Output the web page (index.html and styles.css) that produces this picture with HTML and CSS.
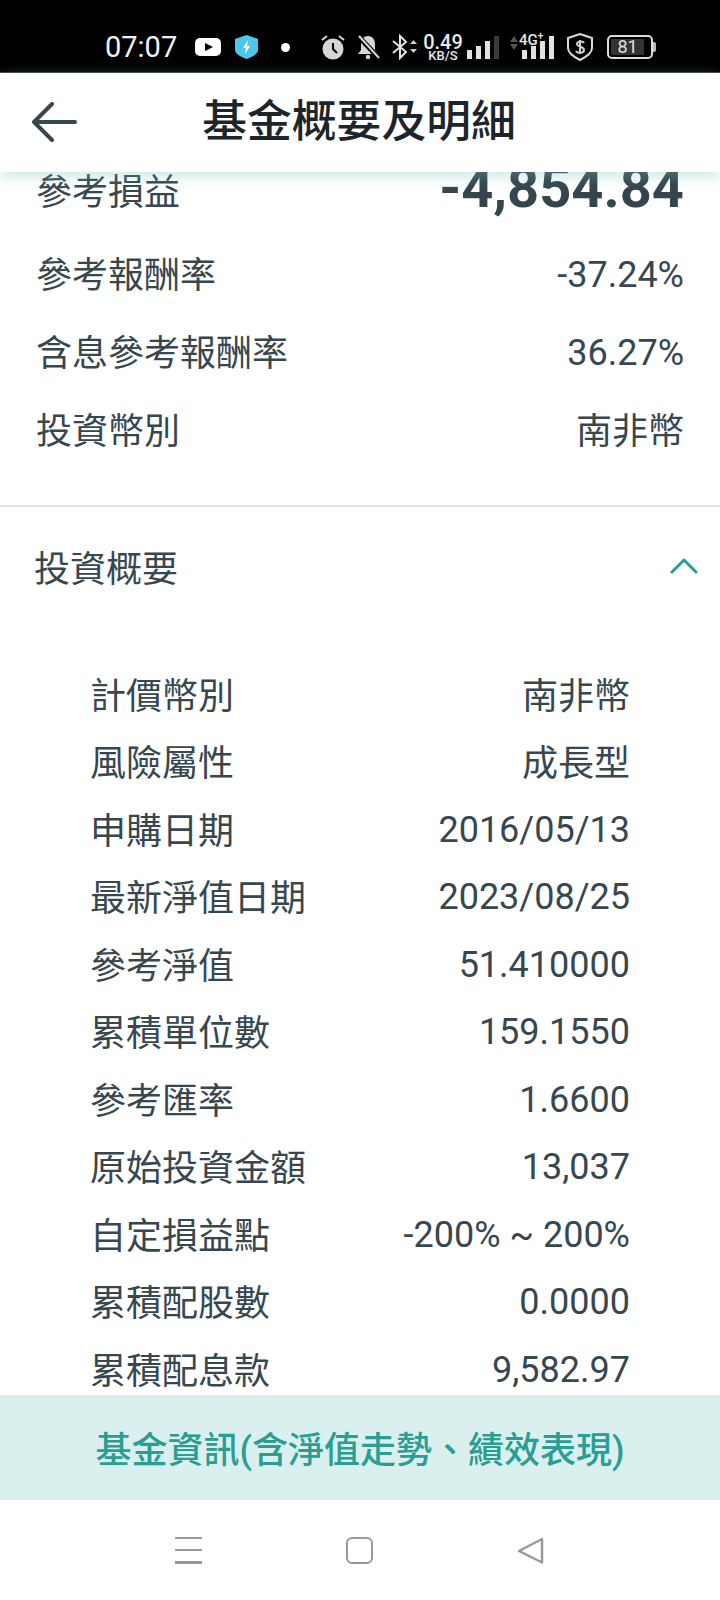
FILE: index.html
```html
<!DOCTYPE html>
<html lang="zh-Hant">
<head>
<meta charset="utf-8">
<title>基金概要及明細</title>
<link rel="stylesheet" href="styles.css">
</head>
<body>
<div class="phone">
  <div class="status">
    <span class="time">07:07</span>
    <svg class="ic-yt" viewBox="0 0 26 18"><rect width="26" height="18" rx="5" fill="#fff"/><path d="M10 5l8 4-8 4z" fill="#000"/></svg>
    <svg class="ic-shield" viewBox="0 0 23 24"><path d="M11.5 0L23 4v11c0 4-6 7-11.500 9C6 22 0 19 0 15V4z" fill="#4cc8ea"/><path d="M13 5l-5 8h3l-1 6 5-8h-3z" fill="#fff"/></svg>
    <span class="dot"></span>
    <svg class="ic-alarm" viewBox="0 0 24 26"><circle cx="12" cy="15" r="10.500" fill="#d6d6d6"/><path d="M12 9v6l4 4" fill="none" stroke="#000" stroke-width="2"/><path d="M1 6l5-4M23 6l-5-4" stroke="#d6d6d6" stroke-width="2" fill="none"/></svg>
    <svg class="ic-bell" viewBox="0 0 24 26"><path d="M12 2c-4 0-7 3-7 8v6l-3 4h20l-3-4v-6c0-5-3-8-7-8z" fill="#d6d6d6"/><circle cx="12" cy="23" r="2.200" fill="#d6d6d6"/><path d="M2 2l21 22" stroke="#000" stroke-width="5"/><path d="M3 2l20 22" stroke="#d6d6d6" stroke-width="2"/></svg>
    <svg class="ic-bt" viewBox="0 0 26 26"><path d="M2 7l13 11-6 6V2l6 6L2 19" fill="none" stroke="#e2e2e2" stroke-width="2"/><path d="M19 10l3.500-4 3.500 4zM19 15l3.500 4 3.500-4z" fill="#cfcfcf"/></svg>
    <span class="speed"><span class="speed-num">0.49</span><span class="speed-unit">KB/S</span></span>
    <svg class="ic-bars" viewBox="0 0 32 23"><rect x="0" y="14" width="5" height="9" fill="#e2e2e2"/><rect x="9" y="10" width="5" height="13" fill="#e2e2e2"/><rect x="18" y="5" width="5" height="18" fill="#e2e2e2"/><rect x="27" y="0" width="5" height="23" fill="#3a3a3a"/></svg>
    <span class="net">
      <svg class="ic-arrows" viewBox="0 0 8 14"><path d="M0 6l4-6 4 6z" fill="#555"/><path d="M0 8l4 6 4-6z" fill="#555"/></svg>
      <span class="net-label">4G<sup class="net-plus">+</sup></span>
      <svg class="ic-bars2" viewBox="0 0 32 23"><rect x="0" y="14" width="5" height="9" fill="#e2e2e2"/><rect x="9" y="10" width="5" height="13" fill="#e2e2e2"/><rect x="18" y="5" width="5" height="18" fill="#e2e2e2"/><rect x="27" y="0" width="5" height="23" fill="#e2e2e2"/></svg>
    </span>
    <svg class="ic-sec" viewBox="0 0 26 28"><path d="M13 1l12 4v10c0 5-6 9-12 12C7 24 1 20 1 15V5z" fill="none" stroke="#dcdcdc" stroke-width="2"/><path d="M17 10c-1-2-7-2-7 1s7 2 7 6-7 3-8 1M13 7v14" fill="none" stroke="#cfcfcf" stroke-width="2"/></svg>
    <span class="battery"><span class="battery-fill">81</span></span><span class="battery-nub"></span>
  </div>

  <header class="topbar">
    <svg class="back" viewBox="0 0 46 40"><path d="M44 20H3M21 2L3 20l18 18" fill="none" stroke="#37474f" stroke-width="4" stroke-linecap="round" stroke-linejoin="round"/></svg>
    <h1 class="title">基金概要及明細</h1>
  </header>

  <main class="content">
    <div class="scroll">
      <section class="summary">
        <div class="sum-row sum-row-first"><span class="cjk">參考損益</span><span class="amount">-4,854.84</span></div>
        <div class="sum-row"><span class="cjk">參考報酬率</span><span class="num">-37.24%</span></div>
        <div class="sum-row"><span class="cjk">含息參考報酬率</span><span class="num">36.27%</span></div>
        <div class="sum-row"><span class="cjk">投資幣別</span><span class="cjk">南非幣</span></div>
      </section>
      <section class="panel">
        <div class="panel-head"><span>投資概要</span>
          <svg class="chevron" viewBox="0 0 28 16"><path d="M2 14L14 2l12 12" fill="none" stroke="#2a9d94" stroke-width="3" stroke-linecap="round" stroke-linejoin="round"/></svg>
        </div>
        <div class="detail">
          <div class="det-row"><span class="cjk">計價幣別</span><span class="cjk">南非幣</span></div>
          <div class="det-row"><span class="cjk">風險屬性</span><span class="cjk">成長型</span></div>
          <div class="det-row"><span class="cjk">申購日期</span><span>2016/05/13</span></div>
          <div class="det-row"><span class="cjk">最新淨值日期</span><span>2023/08/25</span></div>
          <div class="det-row"><span class="cjk">參考淨值</span><span>51.410000</span></div>
          <div class="det-row"><span class="cjk">累積單位數</span><span>159.1550</span></div>
          <div class="det-row"><span class="cjk">參考匯率</span><span>1.6600</span></div>
          <div class="det-row"><span class="cjk">原始投資金額</span><span>13,037</span></div>
          <div class="det-row"><span class="cjk">自定損益點</span><span>-200% ~ 200%</span></div>
          <div class="det-row"><span class="cjk">累積配股數</span><span>0.0000</span></div>
          <div class="det-row"><span class="cjk">累積配息款</span><span>9,582.97</span></div>
        </div>
      </section>
    </div>
  </main>

  <button class="cta" type="button">基金資訊(含淨值走勢、績效表現)</button>

  <nav class="navbar">
    <span class="nav-menu"><i></i><i></i><i></i></span>
    <span class="nav-home"></span>
    <svg class="nav-back" viewBox="0 0 27 27"><path d="M25 2L2 14l23 11.500z" fill="none" stroke="#999" stroke-width="2.500" stroke-linejoin="round"/></svg>
  </nav>
</div>
</body>
</html>
```

FILE: styles.css
```css
* { box-sizing: border-box; }
html, body { margin: 0; padding: 0; background: #fff; }
body { font-family: Roboto, "Noto Sans CJK TC", sans-serif; color: #37474f; }
.phone { width: 720px; height: 1600px; display: flex; flex-direction: column; overflow: hidden; }

.status { height: 73px; flex: none; background: #000; display: flex; align-items: center; padding: 22px 0 0 105px; color: #e8e8e8; border-bottom: 1px solid #444; }
.time { font-size: 29px; line-height: 1; width: 71px; color: #f2f2f2; }
.ic-yt { width: 26px; height: 18px; margin-left: 19px; }
.ic-shield { width: 23px; height: 24px; margin-left: 14px; }
.dot { width: 9px; height: 9px; border-radius: 50%; background: #fff; margin-left: 23px; }
.ic-alarm { width: 24px; height: 26px; margin-left: 31px; }
.ic-bell { width: 24px; height: 26px; margin-left: 11px; }
.ic-bt { width: 26px; height: 26px; margin-left: 11px; }
.speed { width: 38px; margin-left: 7px; display: flex; flex-direction: column; align-items: center; line-height: 1; }
.speed-num { font-size: 20px; font-weight: 500; line-height: 16px; }
.speed-unit { font-size: 13px; font-weight: 500; line-height: 11px; }
.ic-bars { width: 32px; height: 23px; margin-left: 5px; }
.net { display: flex; align-items: flex-end; position: relative; margin-left: 11px; width: 44px; height: 23px; }
.ic-arrows { width: 8px; height: 14px; align-self: flex-start; }
.net-label { position: absolute; left: 9px; top: -3px; font-size: 15px; font-weight: 500; line-height: 14px; }
.net-plus { font-size: 10px; line-height: 0; }
.ic-bars2 { width: 32px; height: 23px; margin-left: 4px; }
.ic-sec { width: 26px; height: 28px; margin-left: 13px; }
.battery { width: 46px; height: 24px; margin-left: 14px; border: 2px solid #dcdcdc; border-radius: 5px; padding: 2px; display: flex; }
.battery-fill { width: 33px; background: #333; border-radius: 2px 0 0 2px; font-size: 18px; line-height: 16px; text-align: center; color: #e0e0e0; }
.battery-nub { width: 3px; height: 10px; background: #bbb; border-radius: 0 2px 2px 0; }

.topbar { position: relative; z-index: 2; height: 99px; flex: none; background: #fff; display: flex; align-items: center; justify-content: center; box-shadow: 0 4px 14px rgba(120, 190, 185, 0.4); }
.back { position: absolute; left: 31px; top: 29px; width: 46px; height: 40px; }
.title { margin: 0 0 0 -2px; font-size: 44.800px; font-weight: 500; line-height: 1; color: #1c2529; }

.content { flex: 1; min-height: 0; overflow: hidden; }
.scroll { margin-top: -25px; }

.cjk { padding-bottom: 4px; }
.num { padding-top: 2px; }
.summary { padding: 0 36px 36px; border-bottom: 2px solid #dde5e4; }
.sum-row { height: 78px; display: flex; align-items: center; justify-content: space-between; font-size: 36px; }
.sum-row-first { height: 88px; }
.amount { font-size: 56px; font-weight: 700; color: #34454e; padding-bottom: 6px; }

.panel-head { height: 80px; margin-top: 19px; padding: 0 22px 0 34px; display: flex; align-items: center; justify-content: space-between; font-size: 36px; }
.chevron { width: 28px; height: 16px; }

.detail { padding: 55px 90px 0 90px; }
.det-row { height: 67.500px; display: flex; align-items: center; justify-content: space-between; font-size: 36px; }

.cta { flex: none; height: 105px; width: 100%; border: 0; border-top: 2px solid #e4ebea; background: #daf0ee; color: #2a9d94; font-family: inherit; font-size: 36px; font-weight: 500; padding: 0 0 4px; }

.navbar { flex: none; height: 100px; background: #fff; display: flex; align-items: center; justify-content: center; gap: 144px; padding-right: 2px; }
.nav-menu { width: 27px; height: 27px; display: flex; flex-direction: column; justify-content: space-between; }
.nav-menu i { display: block; height: 2.500px; background: #999; }
.nav-home { width: 27px; height: 27px; border: 2.500px solid #999; border-radius: 6px; }
.nav-back { width: 27px; height: 27px; }
```
